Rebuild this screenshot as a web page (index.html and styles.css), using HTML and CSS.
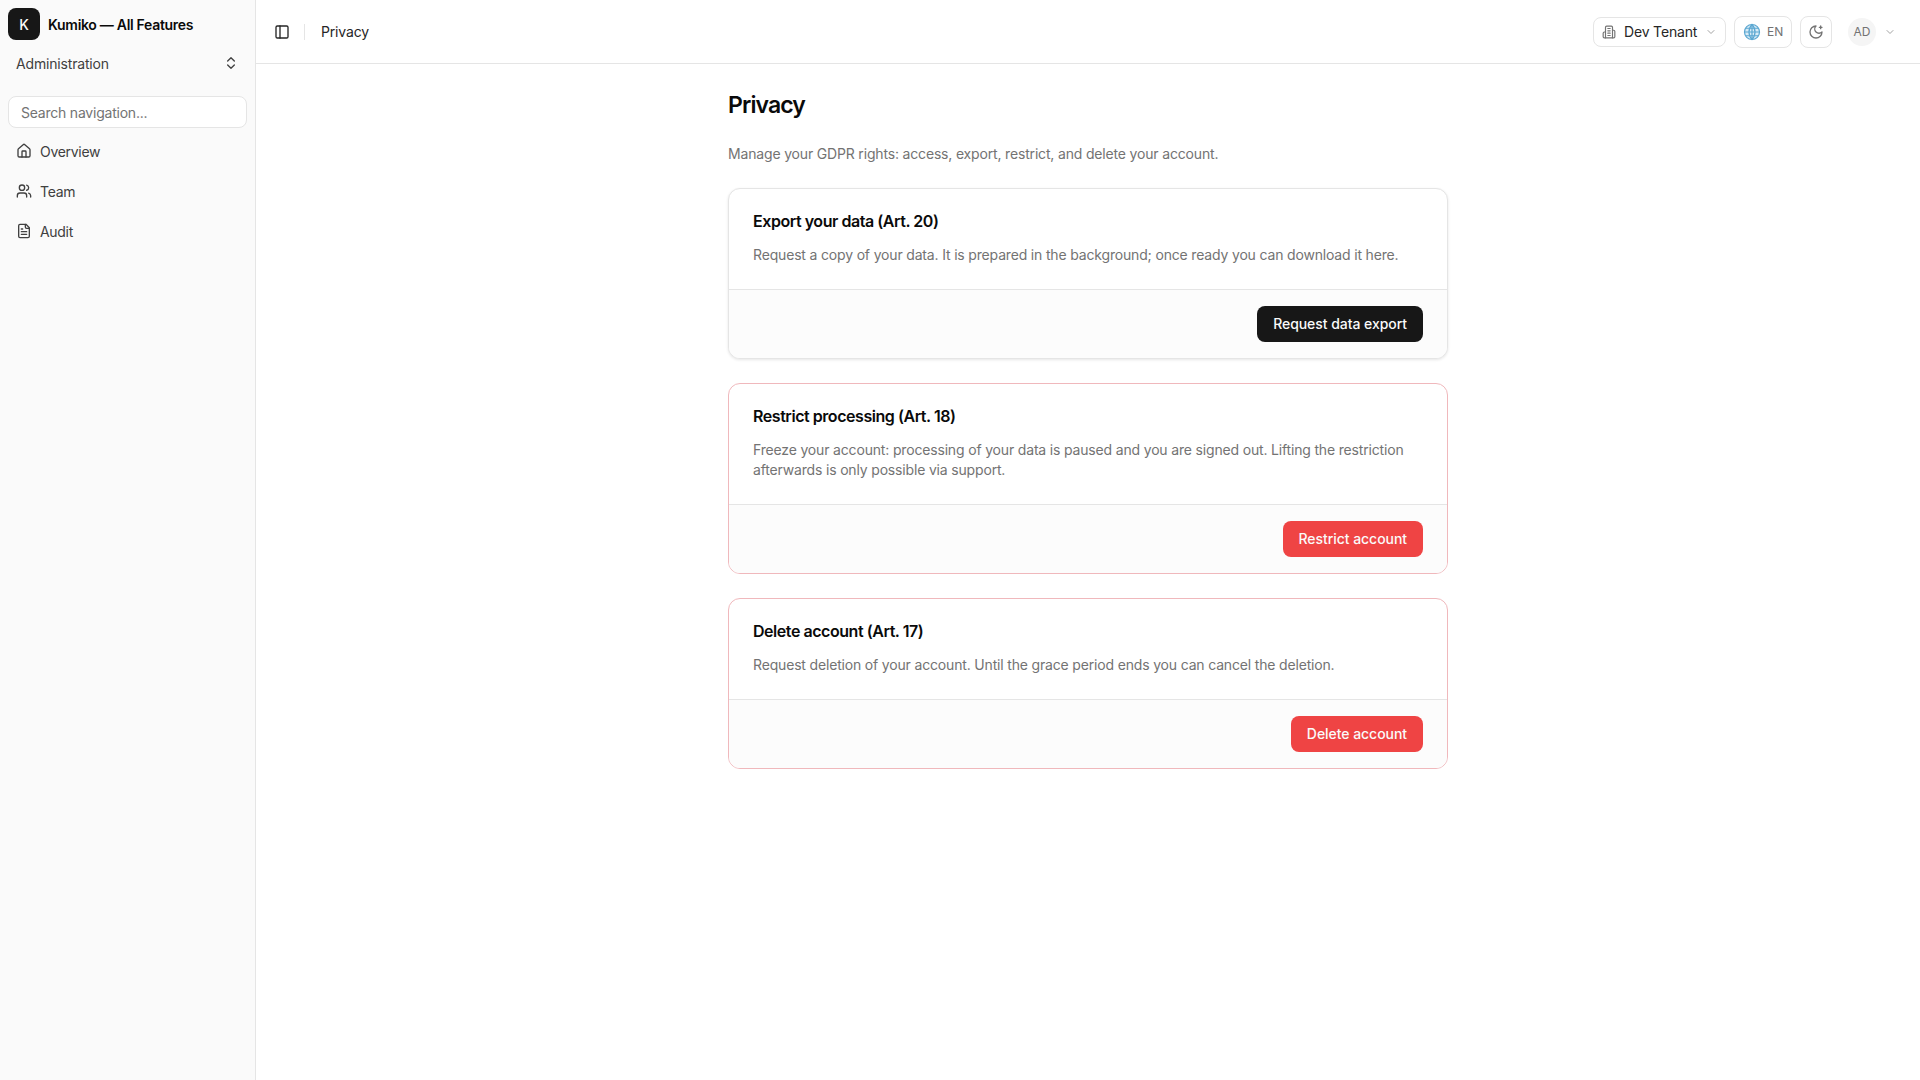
FILE: index.html
```html
<!DOCTYPE html>
<html lang="en">

<head>
	<meta charset="UTF-8">
	<meta name="viewport" content="width=device-width, initial-scale=1.0">
	<title>Privacy</title>
	<link rel="stylesheet" href="styles.css">
</head>

<body>
	<aside class="sidebar">
		<div class="brand">
			<span class="brand-mark">K</span>
			<span class="brand-name">Kumiko — All Features</span>
		</div>
		<div class="section-switch">
			<span>Administration</span>
			<svg class="icon-16" viewBox="0 0 24 24"><path d="m7 15 5 5 5-5"/><path d="m7 9 5-5 5 5"/></svg>
		</div>
		<div class="search">Search navigation...</div>
		<nav class="nav">
			<a class="nav-item">
				<svg class="icon-16" viewBox="0 0 24 24"><path d="M15 21v-8a1 1 0 0 0-1-1h-4a1 1 0 0 0-1 1v8"/><path d="M3 10a2 2 0 0 1 .709-1.528l7-5.999a2 2 0 0 1 2.582 0l7 5.999A2 2 0 0 1 21 10v9a2 2 0 0 1-2 2H5a2 2 0 0 1-2-2z"/></svg>
				Overview
			</a>
			<a class="nav-item">
				<svg class="icon-16" viewBox="0 0 24 24"><path d="M16 21v-2a4 4 0 0 0-4-4H6a4 4 0 0 0-4 4v2"/><circle cx="9" cy="7" r="4"/><path d="M22 21v-2a4 4 0 0 0-3-3.87"/><path d="M16 3.13a4 4 0 0 1 0 7.75"/></svg>
				Team
			</a>
			<a class="nav-item">
				<svg class="icon-16" viewBox="0 0 24 24"><path d="M15 2H6a2 2 0 0 0-2 2v16a2 2 0 0 0 2 2h12a2 2 0 0 0 2-2V7Z"/><path d="M14 2v4a2 2 0 0 0 2 2h4"/><path d="M10 9H8"/><path d="M16 13H8"/><path d="M16 17H8"/></svg>
				Audit
			</a>
		</nav>
	</aside>

	<div class="page">
		<header class="topbar">
			<svg class="icon-16 toggle" viewBox="0 0 24 24"><rect x="3" y="3" width="18" height="18" rx="2"/><path d="M9 3v18"/></svg>
			<span class="divider"></span>
			<span class="crumb">Privacy</span>
			<div class="topbar-right">
				<div class="pill tenant">
					<svg class="icon-14 muted" viewBox="0 0 24 24"><path d="M6 22V4a2 2 0 0 1 2-2h8a2 2 0 0 1 2 2v18Z"/><path d="M6 12H4a2 2 0 0 0-2 2v6a2 2 0 0 0 2 2h2"/><path d="M18 9h2a2 2 0 0 1 2 2v9a2 2 0 0 1-2 2h-2"/><path d="M10 6h4"/><path d="M10 10h4"/><path d="M10 14h4"/><path d="M10 18h4"/></svg>
					<span>Dev Tenant</span>
					<svg class="icon-12 faint" viewBox="0 0 24 24"><path d="m6 9 6 6 6-6"/></svg>
				</div>
				<div class="pill lang">
					<svg class="icon-18 globe" viewBox="0 0 24 24"><circle cx="12" cy="12" r="10"/><path d="M12 2a14.5 14.5 0 0 0 0 20 14.5 14.5 0 0 0 0-20"/><path d="M12 2v20"/><path d="M2 12h20"/><path d="M3.6 7h16.8"/><path d="M3.6 17h16.8"/></svg>
					<span>EN</span>
				</div>
				<div class="pill theme">
					<svg class="icon-16 muted" viewBox="0 0 24 24"><path d="M12 3a6 6 0 0 0 9 9 9 9 0 1 1-9-9Z"/><path d="M19 3v4"/><path d="M21 5h-4"/></svg>
				</div>
				<div class="user">
					<span class="avatar">AD</span>
					<svg class="icon-12 faint" viewBox="0 0 24 24"><path d="m6 9 6 6 6-6"/></svg>
				</div>
			</div>
		</header>

		<main class="content">
			<h1>Privacy</h1>
			<p class="lead">Manage your GDPR rights: access, export, restrict, and delete your account.</p>

			<section class="card">
				<div class="card-body">
					<h2>Export your data (Art. 20)</h2>
					<p>Request a copy of your data. It is prepared in the background; once ready you can download it here.</p>
				</div>
				<div class="card-footer">
					<button class="btn btn-dark">Request data export</button>
				</div>
			</section>

			<section class="card card-danger">
				<div class="card-body">
					<h2>Restrict processing (Art. 18)</h2>
					<p>Freeze your account: processing of your data is paused and you are signed out. Lifting the restriction afterwards is only possible via support.</p>
				</div>
				<div class="card-footer">
					<button class="btn btn-red">Restrict account</button>
				</div>
			</section>

			<section class="card card-danger">
				<div class="card-body">
					<h2>Delete account (Art. 17)</h2>
					<p>Request deletion of your account. Until the grace period ends you can cancel the deletion.</p>
				</div>
				<div class="card-footer">
					<button class="btn btn-red">Delete account</button>
				</div>
			</section>
		</main>
	</div>
</body>

</html>
```

FILE: styles.css
```css
*
{
	box-sizing: border-box;
}

html,
body
{
	height: 100%;
}

body
{
	margin: 0;
	display: flex;
	font-family: 'Inter', 'Liberation Sans', sans-serif;
	font-size: 14px;
	letter-spacing: -0.17px;
	color: #0a0a0a;
	background-color: #fff;
}

svg
{
	fill: none;
	stroke: currentColor;
	stroke-width: 2;
	stroke-linecap: round;
	stroke-linejoin: round;
	flex-shrink: 0;
}

.icon-12
{
	width: 12px;
	height: 12px;
}

.icon-14
{
	width: 14px;
	height: 14px;
}

.icon-16
{
	width: 16px;
	height: 16px;
}

.icon-18
{
	width: 18px;
	height: 18px;
}

.muted
{
	color: #737373;
}

.faint
{
	color: #a3a3a3;
}

/* sidebar */
.sidebar
{
	width: 256px;
	flex-shrink: 0;
	background-color: #fafafa;
	border-right: 1px solid #e5e5e5;
	padding: 8px;
}

.brand
{
	display: flex;
	align-items: center;
	gap: 8px;
	height: 32px;
}

.brand-mark
{
	width: 32px;
	height: 32px;
	border-radius: 8px;
	background-color: #171717;
	color: #fafafa;
	display: flex;
	align-items: center;
	justify-content: center;
	font-size: 14px;
	font-weight: 500;
}

.brand-name
{
	font-size: 14px;
	font-weight: 600;
	letter-spacing: -0.3px;
}

.section-switch
{
	display: flex;
	align-items: center;
	justify-content: space-between;
	height: 32px;
	margin-top: 7px;
	padding: 0 8px;
	color: #404040;
}

.search
{
	height: 32px;
	margin-top: 17px;
	padding: 0 12px;
	display: flex;
	align-items: center;
	background-color: #fff;
	border: 1px solid #e5e5e5;
	border-radius: 8px;
	color: #737373;
	letter-spacing: -0.22px;
}

.nav
{
	margin-top: 3px;
	display: flex;
	flex-direction: column;
}

.nav-item
{
	display: flex;
	align-items: center;
	gap: 8px;
	height: 40px;
	padding: 0 8px;
	color: #404040;
	letter-spacing: -0.3px;
}

/* top bar */
.page
{
	flex: 1;
	min-width: 0;
}

.topbar
{
	height: 64px;
	display: flex;
	align-items: center;
	padding: 0 16px;
	border-bottom: 1px solid #e5e5e5;
}

.toggle
{
	margin-left: 2px;
	color: #262626;
}

.divider
{
	width: 1px;
	height: 16px;
	margin: 0 16px 0 14px;
	background-color: #e5e5e5;
}

.crumb
{
	color: #262626;
}

.topbar-right
{
	margin-left: auto;
	display: flex;
	align-items: center;
	gap: 8px;
}

.pill
{
	display: flex;
	align-items: center;
	height: 32px;
	border: 1px solid #e5e5e5;
	border-radius: 8px;
	background-color: #fff;
}

.tenant
{
	height: 30px;
	width: 133px;
	padding: 0 8px;
	gap: 8px;
	color: #262626;
	white-space: nowrap;
}

.tenant span
{
	flex: 1;
}

.lang
{
	width: 58px;
	padding: 0 8px;
	gap: 6px;
	font-size: 12px;
	letter-spacing: 0;
	color: #737373;
}

.globe
{
	color: #5ba7d1;
	fill: #d8ebf6;
	stroke-width: 1.6;
}

.theme
{
	width: 32px;
	justify-content: center;
}

.user
{
	display: flex;
	align-items: center;
	gap: 8px;
	margin-left: 8px;
	margin-right: 8px;
}

.avatar
{
	width: 28px;
	height: 28px;
	border-radius: 50%;
	background-color: #f5f5f5;
	color: #737373;
	font-size: 12px;
	letter-spacing: 0;
	display: flex;
	align-items: center;
	justify-content: center;
}

/* content */
.content
{
	width: 720px;
	margin: 0 auto;
	padding-top: 25px;
}

h1
{
	margin: 0;
	font-size: 23px;
	line-height: 32px;
	font-weight: 600;
	letter-spacing: -0.9px;
}

.lead
{
	margin: 23px 0 0;
	line-height: 20px;
	color: #737373;
}

.card
{
	margin-top: 24px;
	border: 1px solid #e5e5e5;
	border-radius: 12px;
	background-color: #fff;
	overflow: hidden;
	box-shadow: 0 1px 3px rgba(0, 0, 0, 0.1);
}

.card-danger
{
	border-color: #f0b8bc;
	box-shadow: none;
}

.card-body
{
	padding: 20px 24px 24px;
}

h2
{
	margin: 0;
	font-size: 16px;
	line-height: 24px;
	font-weight: 600;
	letter-spacing: -0.45px;
}

.card-body p
{
	margin: 12px 0 0;
	font-size: 14px;
	line-height: 20px;
	color: #737373;
}

.card-footer
{
	display: flex;
	justify-content: flex-end;
	padding: 16px 24px;
	background-color: #fcfcfc;
	border-top: 1px solid #e5e5e5;
}

.btn
{
	height: 36px;
	padding: 0 16px 2px;
	border: none;
	border-radius: 8px;
	font-family: inherit;
	font-size: 14px;
	font-weight: 500;
	letter-spacing: -0.05px;
	color: #fafafa;
	cursor: pointer;
}

.btn-dark
{
	background-color: #171717;
}

.btn-red
{
	background-color: #ef4444;
}
```
